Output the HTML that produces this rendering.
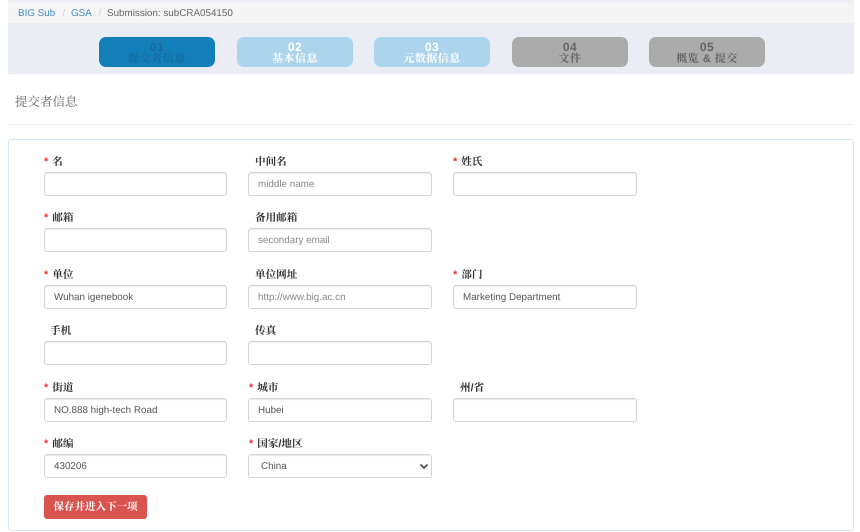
<!DOCTYPE html>
<html><head><meta charset="utf-8">
<style>
html,body{margin:0;padding:0;background:#fff;width:860px;height:532px;overflow:hidden}
body{position:relative;font-family:"Liberation Sans","Noto Sans CJK SC",sans-serif;font-size:9.85px;color:#555;text-rendering:geometricPrecision}
#w{position:absolute;left:0;top:0;width:860px;height:532px;filter:blur(.35px)}
.a{position:absolute}
.step{position:absolute;top:37px;width:116px;height:30px;border-radius:7px;text-align:center;font-weight:bold;font-size:11px;line-height:11.5px;letter-spacing:.5px;box-sizing:border-box;padding-top:5px;font-family:"Liberation Sans","Noto Serif CJK SC",serif}
.step span{display:block}
.step span:first-child{font-size:12px}
.in{position:absolute;width:184px;height:24px;box-sizing:border-box;border:1px solid #d4d4d4;border-radius:3px;background:#fff;box-shadow:inset 0 1px 1px rgba(0,0,0,.075);padding-left:9px;line-height:23px;font-size:9.85px;color:#555}
.c1{width:183px}
.ph{color:#888}
.l{position:absolute;font-weight:bold;font-size:10.6px;line-height:14px;color:#333;font-family:"Liberation Sans","Noto Serif CJK SC",serif;white-space:nowrap;margin-top:1px}
.r{color:#e33;margin-right:4px;font-size:11px;font-family:"Liberation Sans",sans-serif}
.b{position:absolute;top:3px;line-height:21px;white-space:nowrap}
</style></head><body><div id="w">
<div class="a" style="left:8px;top:0;width:846px;height:3px;background:#eceff4"></div>
<div class="a" style="left:8px;top:3px;width:846px;height:20px;background:#f5f5f5"></div>
<div class="b" style="left:18px;color:#428bca">BIG Sub</div>
<div class="b" style="left:62.5px;color:#ccc">/</div>
<div class="b" style="left:71px;color:#428bca">GSA</div>
<div class="b" style="left:98.5px;color:#ccc">/</div>
<div class="b" style="left:107px;color:#666">Submission: subCRA054150</div>
<div class="a" style="left:8px;top:23px;width:846px;height:51px;background:#eaedf3"></div>
<div class="step" style="left:99px;background:#137fb8;color:#1a6a9c"><span>01</span><span>提交者信息</span></div>
<div class="step" style="left:237px;background:#acd4ec;color:#fff"><span>02</span><span>基本信息</span></div>
<div class="step" style="left:374px;background:#acd4ec;color:#fff"><span>03</span><span>元数据信息</span></div>
<div class="step" style="left:512px;background:#ababab;color:#666"><span>04</span><span>文件</span></div>
<div class="step" style="left:649px;background:#ababab;color:#666"><span>05</span><span>概览 &amp; 提交</span></div>
<div class="a" style="left:15px;top:92px;font-size:12.5px;line-height:18px;color:#666;font-family:'Noto Serif CJK SC',serif">提交者信息</div>
<div class="a" style="left:8px;top:124px;width:846px;height:1px;background:#eee"></div>
<div class="a" style="left:8px;top:139px;width:846px;height:392px;box-sizing:border-box;border:1px solid #d3e9f2;border-radius:3px"></div>

<div class="l" style="left:44px;top:154px"><span class="r">*</span>名</div>
<div class="l" style="left:255px;top:154px">中间名</div>
<div class="l" style="left:453px;top:154px"><span class="r">*</span>姓氏</div>
<div class="in c1" style="left:44px;top:172px"></div>
<div class="in ph" style="left:248px;top:172px">middle name</div>
<div class="in" style="left:453px;top:172px"></div>

<div class="l" style="left:44px;top:210px"><span class="r">*</span>邮箱</div>
<div class="l" style="left:255px;top:210px">备用邮箱</div>
<div class="in c1" style="left:44px;top:228px"></div>
<div class="in ph" style="left:248px;top:228px">secondary email</div>

<div class="l" style="left:44px;top:267px"><span class="r">*</span>单位</div>
<div class="l" style="left:255px;top:267px">单位网址</div>
<div class="l" style="left:453px;top:267px"><span class="r">*</span>部门</div>
<div class="in c1" style="left:44px;top:285px">Wuhan igenebook</div>
<div class="in ph" style="left:248px;top:285px">http://www.big.ac.cn</div>
<div class="in" style="left:453px;top:285px">Marketing Department</div>

<div class="l" style="left:50px;top:323px">手机</div>
<div class="l" style="left:255px;top:323px">传真</div>
<div class="in c1" style="left:44px;top:341px"></div>
<div class="in" style="left:248px;top:341px"></div>

<div class="l" style="left:44px;top:380px"><span class="r">*</span>街道</div>
<div class="l" style="left:249px;top:380px"><span class="r">*</span>城市</div>
<div class="l" style="left:460px;top:380px">州/省</div>
<div class="in c1" style="left:44px;top:398px">NO.888 high-tech Road</div>
<div class="in" style="left:248px;top:398px">Hubei</div>
<div class="in" style="left:453px;top:398px"></div>

<div class="l" style="left:44px;top:436px"><span class="r">*</span>邮编</div>
<div class="l" style="left:249px;top:436px"><span class="r">*</span>国家/地区</div>
<div class="in c1" style="left:44px;top:454px">430206</div>
<div class="in" style="left:248px;top:454px;padding-left:12px">China<svg style="position:absolute;right:2px;top:8px" width="10" height="7" viewBox="0 0 10 7"><path d="M1.5 1.5L5 5L8.5 1.5" fill="none" stroke="#444" stroke-width="1.6"/></svg></div>

<div class="a" style="left:44px;top:495px;width:103px;height:24px;background:#d9534f;border-radius:3px;color:#fff;font-weight:bold;font-size:10.5px;line-height:24px;text-align:center;font-family:'Noto Serif CJK SC',serif">保存并进入下一项</div>
</div></body></html>
